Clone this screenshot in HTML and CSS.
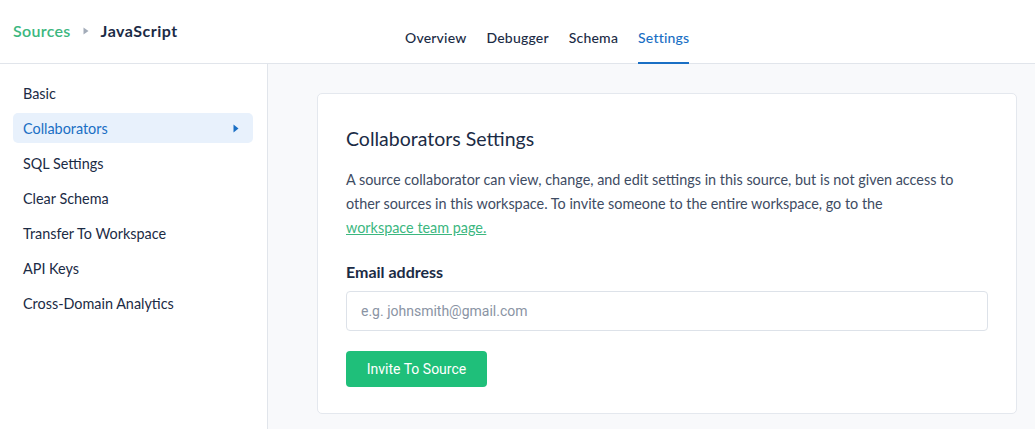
FILE: index.html
```html
<!DOCTYPE html>
<html>
<head>
<meta charset="utf-8">
<link rel="stylesheet" href="styles.css">
</head>
<body>
<div class="app">
  <header class="topbar">
    <div class="crumbs">
      <span class="crumb-link">Sources</span>
      <svg class="crumb-sep" width="8" height="8" viewBox="0 0 8 8"><path d="M1.5 0.5 L6.5 4 L1.5 7.5 Z" fill="#a3acb9"/></svg>
      <span class="crumb-current">JavaScript</span>
    </div>
    <nav class="tabs">
      <span class="tab">Overview</span>
      <span class="tab">Debugger</span>
      <span class="tab">Schema</span>
      <span class="tab active">Settings</span>
    </nav>
  </header>
  <div class="body">
    <aside class="sidebar">
      <div class="side-item">Basic</div>
      <div class="side-item active"><span>Collaborators</span><svg width="6" height="9" viewBox="0 0 6 9"><path d="M0.5 0.5 L5.5 4.5 L0.5 8.5 Z" fill="#1a6fc4"/></svg></div>
      <div class="side-item">SQL Settings</div>
      <div class="side-item">Clear Schema</div>
      <div class="side-item">Transfer To Workspace</div>
      <div class="side-item">API Keys</div>
      <div class="side-item">Cross-Domain Analytics</div>
    </aside>
    <main class="content">
      <section class="card">
        <h1 class="card-title">Collaborators Settings</h1>
        <p class="desc">A source collaborator can view, change, and edit settings in this source, but is not given access to other sources in this workspace. To invite someone to the entire workspace, go to the <a class="link">workspace team page.</a></p>
        <label class="field-label">Email address</label>
        <div class="input"><span class="placeholder">e.g. johnsmith@gmail.com</span></div>
        <button class="btn">Invite To Source</button>
      </section>
    </main>
  </div>
</div>
</body>
</html>
```

FILE: styles.css
```css
* { box-sizing: border-box; }
html, body { margin: 0; padding: 0; }
body {
  font-family: "Lato", "Noto Sans", sans-serif;
  color: #1b2b45;
  background: #fff;
  width: 1035px;
  height: 429px;
  overflow: hidden;
}
.app { display: flex; flex-direction: column; height: 429px; }
.topbar {
  height: 64px;
  border-bottom: 1px solid #e1e5eb;
  display: flex;
  flex-shrink: 0;
}
.crumbs {
  flex: 0 0 267px;
  display: flex;
  align-items: center;
  padding-left: 13px;
  height: 62px;
  font-size: 16px;
  padding-bottom: 1px;
}
.crumb-link { color: #3cb77f; font-weight: 600; letter-spacing: 0.3px; }
.crumb-sep { margin: 1px 11px 0 11px; }
.crumb-current { color: #1b2b45; font-weight: 700; letter-spacing: 0.5px; }
.tabs {
  display: flex;
  gap: 20px;
  padding-left: 138px;
  height: 63px;
}
.tab {
  font-size: 14px;
  color: #1b2b45;
  display: flex;
  align-items: center;
  padding-top: 13px;
  border-bottom: 2px solid transparent;
  margin-bottom: -1px;
  font-weight: 500;
  letter-spacing: 0.2px;
}
.tab.active { color: #1a6fc4; border-bottom-color: #1a6fc4; }
.body { display: flex; flex: 1; min-height: 0; }
.sidebar {
  width: 268px;
  border-right: 1px solid #e1e5eb;
  padding: 14px 14px 0 13px;
  display: flex;
  flex-direction: column;
  gap: 5px;
  flex-shrink: 0;
}
.side-item {
  height: 30px;
  padding: 0 14px 0 10px;
  display: flex;
  align-items: center;
  justify-content: space-between;
  font-size: 14.4px;
  color: #1b2b45;
  border-radius: 5px;
}
.side-item.active { background: #e8f1fc; color: #1a6fc4; }
.content {
  flex: 1;
  background: #f8f9fb;
  padding: 29px 18px 0 49px;
}
.card {
  background: #fff;
  border: 1px solid #e4e8ee;
  border-radius: 5px;
  padding: 31px 28px 26px 28px;
}
.card-title {
  margin: 0 0 15px 0;
  font-size: 19.5px;
  font-weight: 400;
  line-height: 28px;
  color: #1b2b45;
}
.desc {
  margin: 0 0 22px 0;
  font-size: 14.4px;
  line-height: 24px;
  color: #3e4c63;
}
.link { color: #3cb77f; text-decoration: underline; white-space: nowrap; }
.field-label {
  display: block;
  font-size: 16px;
  font-weight: 700;
  line-height: 20px;
  margin-bottom: 9px;
}
.input {
  height: 40px;
  border: 1px solid #dde2e9;
  border-radius: 4px;
  display: flex;
  align-items: center;
  padding-left: 14px;
  margin-bottom: 20px;
}
.placeholder { font-family: "Roboto", sans-serif; font-size: 14px; color: #8a94a4; }
.btn {
  display: block;
  height: 36px;
  width: 141px;
  background: #1fbf7a;
  border: none;
  border-radius: 4px;
  color: #fff;
  font-family: "Roboto", sans-serif;
  font-size: 14px;
  font-weight: 400;
  padding: 0;
}
```
